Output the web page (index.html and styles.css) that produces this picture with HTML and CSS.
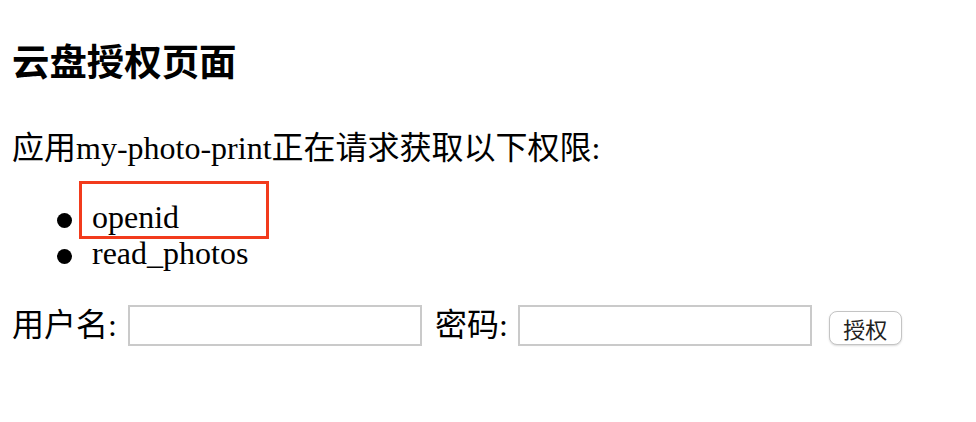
FILE: index.html
```html
<!DOCTYPE html>
<html lang="zh-CN">
<head>
<meta charset="utf-8">
<title>云盘授权页面</title>
<link rel="stylesheet" href="styles.css">
</head>
<body>
<h3 class="title">云盘授权页面</h3>
<p class="intro">应用my-photo-print正在请求获取以下权限:</p>
<ul class="scopes">
  <li>openid</li>
  <li>read_photos</li>
</ul>
<form class="login">
  <label class="lbl" for="u">用户名:</label>
  <input class="field" id="u" type="text">
  <label class="lbl lbl-pw" for="p">密码:</label>
  <input class="field" id="p" type="password">
  <button class="btn" type="button">授权</button>
</form>
<div class="highlight"></div>
</body>
</html>
```

FILE: styles.css
```css
html, body {
  background: #ffffff;
}
body {
  margin: 0;
  padding: 0 12px;
  font-family: "Liberation Serif", "Noto Sans CJK SC", serif;
  font-size: 32px;
  line-height: 37px;
  color: #000000;
  position: relative;
  min-height: 422px;
}
.title {
  font-size: 37.44px;
  line-height: 43px;
  font-weight: bold;
  margin: 0;
  padding-top: 42px;
}
.intro {
  margin: 45px 0 0 0;
}
.scopes {
  margin: 32px 0 0 0;
  padding-left: 80px;
  list-style: none;
}
.scopes li {
  line-height: 36px;
}
.scopes li::before {
  content: "";
  display: inline-block;
  width: 15px;
  height: 15px;
  border-radius: 50%;
  background: #000000;
  margin-left: -35px;
  margin-right: 20px;
  vertical-align: 0;
}
.login {
  margin: 34px 0 0 0;
  display: flex;
  align-items: center;
}
.lbl {
  margin-right: 11px;
}
.lbl-pw {
  margin-left: 13px;
  margin-right: 10px;
}
.field {
  box-sizing: border-box;
  width: 294px;
  height: 41px;
  border: 2px solid #cacaca;
  background: #ffffff;
  margin: 0;
  padding: 0 4px;
  font-size: 26px;
}
.btn {
  box-sizing: border-box;
  margin: 4px 0 0 17px;
  width: 73px;
  height: 34px;
  padding: 0;
  border: 1px solid #c4c4c4;
  border-radius: 8px;
  background: #ffffff;
  box-shadow: 0 1px 2px rgba(0, 0, 0, 0.15);
  font-family: "Noto Sans CJK SC", sans-serif;
  font-size: 22px;
  line-height: 30px;
  color: #222222;
}
.highlight {
  position: absolute;
  left: 79px;
  top: 181px;
  width: 190px;
  height: 58px;
  box-sizing: border-box;
  border: 3px solid #f23b1c;
}
```
